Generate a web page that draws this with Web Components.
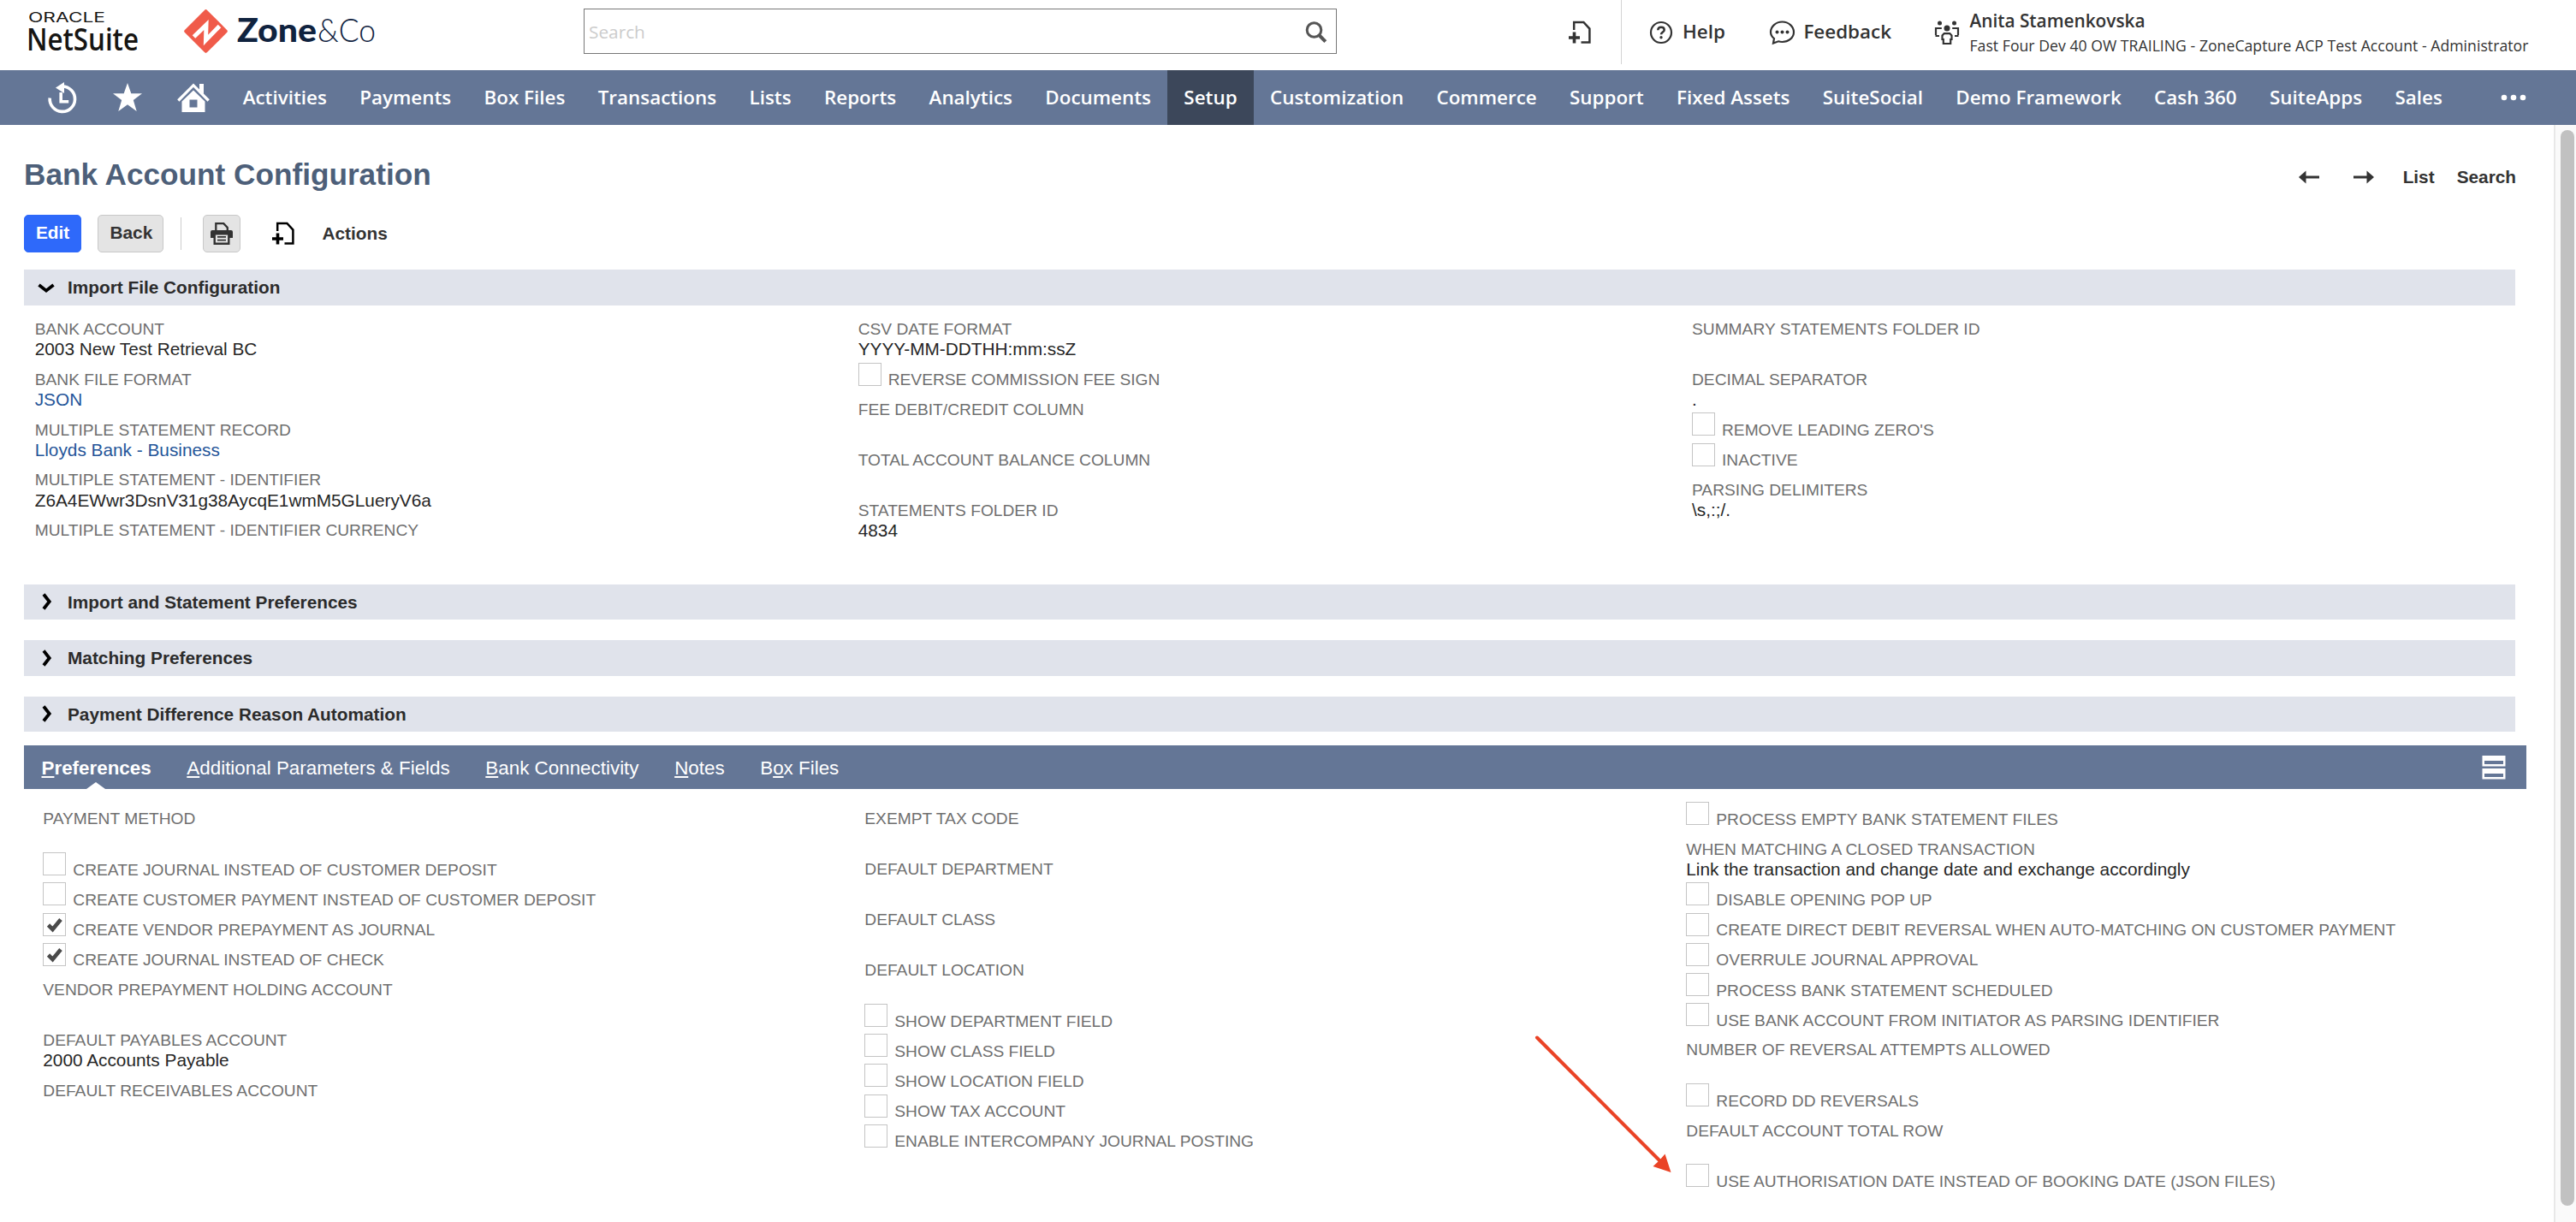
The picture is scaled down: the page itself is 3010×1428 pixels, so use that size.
<!DOCTYPE html>
<html lang="en">
<head>
<meta charset="utf-8">
<title>Bank Account Configuration</title>
<style>
  body {
    margin: 0;
    width: 3010px;
    height: 1428px;
    overflow: hidden;
    background: #fff;
    color: #262626;
    font: 20.8px "Liberation Sans", Arial, sans-serif;
  }
</style>
</head>
<body>
<ns-app>
  <ns-header slot="header" user="Anita Stamenkovska" role-name="Fast Four Dev 40 OW TRAILING - ZoneCapture ACP Test Account - Administrator"></ns-header>
  <ns-nav slot="nav">
    <ns-nav-item>Activities</ns-nav-item>
    <ns-nav-item>Payments</ns-nav-item>
    <ns-nav-item>Box Files</ns-nav-item>
    <ns-nav-item>Transactions</ns-nav-item>
    <ns-nav-item>Lists</ns-nav-item>
    <ns-nav-item>Reports</ns-nav-item>
    <ns-nav-item>Analytics</ns-nav-item>
    <ns-nav-item>Documents</ns-nav-item>
    <ns-nav-item active>Setup</ns-nav-item>
    <ns-nav-item>Customization</ns-nav-item>
    <ns-nav-item>Commerce</ns-nav-item>
    <ns-nav-item>Support</ns-nav-item>
    <ns-nav-item>Fixed Assets</ns-nav-item>
    <ns-nav-item>SuiteSocial</ns-nav-item>
    <ns-nav-item>Demo Framework</ns-nav-item>
    <ns-nav-item>Cash 360</ns-nav-item>
    <ns-nav-item>SuiteApps</ns-nav-item>
    <ns-nav-item>Sales</ns-nav-item>
  </ns-nav>

  <ns-page-head>Bank Account Configuration</ns-page-head>
  <ns-toolbar></ns-toolbar>

  <ns-section heading="Import File Configuration" open>
    <ns-columns style="--columns: 962px 974.3px 1fr; --inset: 12.7px; height: 326px; padding-top: 5.4px">
      <ns-column>
        <ns-field label="BANK ACCOUNT">2003 New Test Retrieval BC</ns-field>
        <ns-field label="BANK FILE FORMAT" link>JSON</ns-field>
        <ns-field label="MULTIPLE STATEMENT RECORD" link>Lloyds Bank - Business</ns-field>
        <ns-field label="MULTIPLE STATEMENT - IDENTIFIER">Z6A4EWwr3DsnV31g38AycqE1wmM5GLueryV6a</ns-field>
        <ns-field label="MULTIPLE STATEMENT - IDENTIFIER CURRENCY"></ns-field>
      </ns-column>
      <ns-column>
        <ns-field label="CSV DATE FORMAT">YYYY-MM-DDTHH:mm:ssZ</ns-field>
        <ns-check>REVERSE COMMISSION FEE SIGN</ns-check>
        <ns-field label="FEE DEBIT/CREDIT COLUMN"></ns-field>
        <ns-field label="TOTAL ACCOUNT BALANCE COLUMN"></ns-field>
        <ns-field label="STATEMENTS FOLDER ID">4834</ns-field>
      </ns-column>
      <ns-column>
        <ns-field label="SUMMARY STATEMENTS FOLDER ID"></ns-field>
        <ns-field label="DECIMAL SEPARATOR">.</ns-field>
        <ns-check>REMOVE LEADING ZERO'S</ns-check>
        <ns-check>INACTIVE</ns-check>
        <ns-field label="PARSING DELIMITERS">\s,:;/.</ns-field>
      </ns-column>
    </ns-columns>
  </ns-section>
  <ns-section heading="Import and Statement Preferences"></ns-section>
  <ns-section heading="Matching Preferences"></ns-section>
  <ns-section heading="Payment Difference Reason Automation"></ns-section>

  <ns-tabs>
    <ns-tab active><u>P</u>references</ns-tab>
    <ns-tab><u>A</u>dditional Parameters &amp; Fields</ns-tab>
    <ns-tab><u>B</u>ank Connectivity</ns-tab>
    <ns-tab><u>N</u>otes</ns-tab>
    <ns-tab>B<u>o</u>x Files</ns-tab>
    <ns-columns slot="panel" style="--columns: 960px 960px 1fr; --inset: 22.3px; padding-top: 12.6px">
      <ns-column>
        <ns-field label="PAYMENT METHOD"></ns-field>
        <ns-check>CREATE JOURNAL INSTEAD OF CUSTOMER DEPOSIT</ns-check>
        <ns-check>CREATE CUSTOMER PAYMENT INSTEAD OF CUSTOMER DEPOSIT</ns-check>
        <ns-check checked>CREATE VENDOR PREPAYMENT AS JOURNAL</ns-check>
        <ns-check checked>CREATE JOURNAL INSTEAD OF CHECK</ns-check>
        <ns-field label="VENDOR PREPAYMENT HOLDING ACCOUNT"></ns-field>
        <ns-field label="DEFAULT PAYABLES ACCOUNT">2000 Accounts Payable</ns-field>
        <ns-field label="DEFAULT RECEIVABLES ACCOUNT"></ns-field>
      </ns-column>
      <ns-column>
        <ns-field label="EXEMPT TAX CODE"></ns-field>
        <ns-field label="DEFAULT DEPARTMENT"></ns-field>
        <ns-field label="DEFAULT CLASS"></ns-field>
        <ns-field label="DEFAULT LOCATION"></ns-field>
        <ns-check>SHOW DEPARTMENT FIELD</ns-check>
        <ns-check>SHOW CLASS FIELD</ns-check>
        <ns-check>SHOW LOCATION FIELD</ns-check>
        <ns-check>SHOW TAX ACCOUNT</ns-check>
        <ns-check>ENABLE INTERCOMPANY JOURNAL POSTING</ns-check>
      </ns-column>
      <ns-column>
        <ns-check>PROCESS EMPTY BANK STATEMENT FILES</ns-check>
        <ns-field label="WHEN MATCHING A CLOSED TRANSACTION">Link the transaction and change date and exchange accordingly</ns-field>
        <ns-check>DISABLE OPENING POP UP</ns-check>
        <ns-check>CREATE DIRECT DEBIT REVERSAL WHEN AUTO-MATCHING ON CUSTOMER PAYMENT</ns-check>
        <ns-check>OVERRULE JOURNAL APPROVAL</ns-check>
        <ns-check>PROCESS BANK STATEMENT SCHEDULED</ns-check>
        <ns-check>USE BANK ACCOUNT FROM INITIATOR AS PARSING IDENTIFIER</ns-check>
        <ns-field label="NUMBER OF REVERSAL ATTEMPTS ALLOWED"></ns-field>
        <ns-check>RECORD DD REVERSALS</ns-check>
        <ns-field label="DEFAULT ACCOUNT TOTAL ROW"></ns-field>
        <ns-check>USE AUTHORISATION DATE INSTEAD OF BOOKING DATE (JSON FILES)</ns-check>
      </ns-column>
    </ns-columns>
  </ns-tabs>
  <ns-scrollbar slot="scrollbar"></ns-scrollbar>
  <ns-pointer slot="overlay"></ns-pointer>
</ns-app>

<script>
// name: [width, height, markup]
const icons = {
  search: [26, 26, `<circle cx="10.5" cy="10" r="8.3" fill="none" stroke="#555" stroke-width="3"/><path d="M16.3 16l7.5 7.7" stroke="#555" stroke-width="4"/>`],
  newdoc: [26, 28, `<path d="M6.2 11V2h11.2L24.4 9.6V25.6H14.5" fill="none" stroke="currentColor" stroke-width="2.5"/><path d="M0 20h13M6.5 13.6v13" stroke="currentColor" stroke-width="3.6"/>`],
  help: [28, 28, `<circle cx="14" cy="14" r="12" fill="none" stroke="#333" stroke-width="2.2"/><path d="M10.3 11.2c0-2.200 1.600-3.500 3.700-3.500s3.700 1.200 3.700 3.200c0 2.500-3.700 2.600-3.700 5.300" fill="none" stroke="#333" stroke-width="2.500"/><circle cx="14" cy="19.800" r="1.700" fill="#333"/>`],
  feedback: [31, 28, `<path d="M5 26.500l1-5.500C3.500 19 2 16.500 2 13.500 2 7 8 1.500 15.500 1.500S29 7 29 13.500 23 25 15.500 25c-1.700 0-3-.2-4.500-.7z" fill="none" stroke="#333" stroke-width="2.200"/><g fill="#333"><circle cx="9.500" cy="13.500" r="2"/><circle cx="15.500" cy="13.500" r="2"/><circle cx="21.500" cy="13.500" r="2"/></g>`],
  role: [30, 30, `<g fill="#333"><circle cx="6.500" cy="3" r="2.500"/><circle cx="23.500" cy="3" r="2.500"/><circle cx="15" cy="9" r="3.500"/></g><path d="M8.800 9H2v8M21.200 9H28v8M1.500 18h4.500M28.500 18h-4.500M10.800 27v-5H9.500v-4.500l2.200-2.400h6.600l2.200 2.400V22h-1.300v5z" fill="none" stroke="#333" stroke-width="2.200"/>`],
  history: [34, 36, `<path d="M2.200 18.500A14.700 14.700 0 1 0 17 5" fill="none" stroke="#fff" stroke-width="3.600"/><path d="M9 6.500L19 0v13z" fill="#fff"/><path d="M15.200 12v10.800h9" fill="none" stroke="#fff" stroke-width="3.600"/>`],
  star: [34, 34, `<path d="M17 0l4.300 12.300H34L23.800 20 27.700 33 17 25.300 6.300 33l3.900-13L0 12.300h12.700z" fill="#fff"/>`],
  home: [38, 34, `<path d="M19 8.500l13.500 13V34h-27V21.500zM14.500 19.500v9h9v-9z" fill="#fff" fill-rule="evenodd"/><path d="M1.300 20.500L19 2.700l17.700 17.800" fill="none" stroke="#fff" stroke-width="3.200"/><path d="M26 1h5v12l-5-5z" fill="#fff"/>`],
  dots: [30, 8, `<g fill="#fff"><circle cx="4" cy="4" r="3.300"/><circle cx="15" cy="4" r="3.300"/><circle cx="26" cy="4" r="3.300"/></g>`],
  left: [24, 16, `<path d="M24 8H5" stroke="#333" stroke-width="3"/><path d="M0 8l8.500-7.500v15z" fill="#333"/>`],
  right: [24, 16, `<path d="M0 8h19" stroke="#333" stroke-width="3"/><path d="M24 8L15.500.5v15z" fill="#333"/>`],
  printer: [26, 26, `<path d="M6.300 10V1.200h9l4.500 4.700V10" fill="none" stroke="#333" stroke-width="2.300"/><path d="M2 9h22a2 2 0 0 1 2 2v7h-4v-4H4v4H0v-7a2 2 0 0 1 2-2z" fill="#333"/><path d="M4.700 13.200h16.600v11.500H4.700z" fill="#e4e4e4" stroke="#333" stroke-width="2.400"/><path d="M8 16.800h10M8 20.600h10" stroke="#333" stroke-width="1.800"/>`],
  down: [20, 12, `<path d="M1.500 2L10 8.700 18.500 2" fill="none" stroke="#000" stroke-width="3.800"/>`],
  next: [12, 20, `<path d="M2 1.500L8.700 10 2 18.500" fill="none" stroke="#000" stroke-width="3.800"/>`],
  check: [20, 17, `<path d="M2.500 9l5 5L17 2.500" fill="none" stroke="#4a4a4a" stroke-width="4.600"/>`],
  rows: [28, 28, `<path d="M.5 0h27v12.500H.5zM3 6v4h22V6zM.5 15h27v12.500H.5zM3 21v4h22v-4z" fill="#fff" fill-rule="evenodd"/>`],
};

function define(name, html, setup) {
  const template = document.createElement("template");
  template.innerHTML = html;
  customElements.define(name, class extends HTMLElement {
    constructor() {
      super();
      this.attachShadow({ mode: "open" }).appendChild(template.content.cloneNode(true));
    }
    connectedCallback() {
      if (setup) setup(this, this.shadowRoot);
    }
  });
}

define("ns-icon", `<style>:host { display: block; flex: none; } svg { display: block; overflow: visible; }</style><span></span>`, (host, root) => {
  const [w, h, markup] = icons[host.getAttribute("name")];
  root.querySelector("span").innerHTML = `<svg width="${w}" height="${h}" viewBox="0 0 ${w} ${h}">${markup}</svg>`;
});

define("ns-app", `
  <style>
    :host { display: grid; grid-template: 82px 64px 1fr / 1fr 26px; height: 1428px; position: relative; }
    .header, .nav { grid-column: 1 / -1; }
    main { padding: 0 32px 0 28px; min-width: 0; overflow: hidden; }
  </style>
  <div class="header"><slot name="header"></slot></div>
  <div class="nav"><slot name="nav"></slot></div>
  <main><slot></slot></main>
  <slot name="scrollbar"></slot>
  <slot name="overlay"></slot>
`);

define("ns-logo", `
  <style>:host { display: block; flex: none; } svg { display: block; }</style>
  <svg width="460" height="82" viewBox="0 0 460 82">
    <g fill="#161513">
      <text x="33" y="25.5" font-family="Inter, sans-serif" font-weight="400" font-size="15.5" textLength="90" lengthAdjust="spacingAndGlyphs">ORACLE</text>
      <text x="31" y="59" font-family="Open Sans, sans-serif" font-size="36.500" textLength="131" lengthAdjust="spacingAndGlyphs">NetSuite</text>
    </g>
    <path d="M240.500 13.500L263.500 36.500 240.500 59.500 217.500 36.500z" fill="#f05b4a" stroke="#f05b4a" stroke-width="4.500" stroke-linejoin="round"/>
    <path d="M226.500 43L241 29l-.5 18L256.500 30.500" fill="none" stroke="#fff" stroke-width="5"/>
    <g fill="#10233f" font-family="Lato, sans-serif" font-size="38">
      <text x="277" y="49" font-weight="900" textLength="93" lengthAdjust="spacingAndGlyphs">Zone</text>
      <text x="371" y="49" font-weight="300" textLength="68" lengthAdjust="spacingAndGlyphs">&amp;Co</text>
    </g>
  </svg>
`);

define("ns-header", `
  <style>
    :host { display: flex; height: 82px; color: #333; font: 600 22.4px "Open Sans", sans-serif; }
    .search { box-sizing: border-box; width: 880px; height: 53px; margin: 10px 271px 0 222px; padding: 0 10.5px 0 5px; border: 1px solid #777; display: flex; align-items: center; justify-content: space-between; color: #ccc; font-weight: 400; font-size: 20.8px; }
    .search ns-icon { margin-top: 2px; }
    .new { margin-top: 24px; width: 61px; }
    .rule { width: 1px; height: 75px; background: #d4d4d4; margin-right: 32px; }
    .link { display: flex; gap: 11px; height: 26px; margin-top: 24px; line-height: 26px; }
    .feedback { margin-left: 51px; gap: 9.5px; }
    .user { display: flex; gap: 11px; margin-left: 50.5px; }
    .user ns-icon { margin-top: 24px; }
    .name { margin-top: 8px; line-height: 33px; font-size: 20.8px; }
    .role { line-height: 24px; font-size: 17.6px; letter-spacing: .045px; font-weight: 400; white-space: nowrap; }
  </style>
  <ns-logo></ns-logo>
  <div class="search"><span>Search</span><ns-icon name="search"></ns-icon></div>
  <ns-icon class="new" name="newdoc"></ns-icon>
  <div class="rule"></div>
  <div class="link"><ns-icon name="help"></ns-icon><span>Help</span></div>
  <div class="link feedback"><ns-icon name="feedback"></ns-icon><span>Feedback</span></div>
  <div class="user">
    <ns-icon name="role"></ns-icon>
    <div><div class="name"></div><div class="role"></div></div>
  </div>
`, (host, root) => {
  root.querySelector(".name").textContent = host.getAttribute("user");
  root.querySelector(".role").textContent = host.getAttribute("role-name");
});

define("ns-nav", `
  <style>
    :host { display: flex; height: 64px; background: #647696; color: #fff; box-sizing: border-box; padding: 0 58px 0 56px; }
    .icons { display: flex; align-items: center; gap: 41.5px; width: 208.5px; }
    .items { display: flex; flex: 1; }
    .more { align-self: center; }
  </style>
  <div class="icons"><ns-icon name="history"></ns-icon><ns-icon name="star"></ns-icon><ns-icon name="home"></ns-icon></div>
  <div class="items"><slot></slot></div>
  <ns-icon class="more" name="dots"></ns-icon>
`);

define("ns-nav-item", `
  <style>
    :host { display: block; padding: 0 19.2px; font: 600 22.4px/63px "Open Sans", sans-serif; white-space: nowrap; }
    :host([active]) { background: #3c475a; }
  </style>
  <slot></slot>
`);

define("ns-page-head", `
  <style>
    :host { display: flex; justify-content: space-between; height: 105px; padding-right: 12px; }
    h1 { margin: 38px 0 0; font-size: 35.2px; line-height: 40px; color: #4d5f79; }
    nav { display: flex; align-items: center; height: 24px; margin-top: 49px; font-weight: bold; color: #333; }
    .left { margin-right: 40px; }
    .right { margin-right: 33.5px; }
    .list { margin-right: 26px; }
  </style>
  <h1><slot></slot></h1>
  <nav>
    <ns-icon class="left" name="left"></ns-icon>
    <ns-icon class="right" name="right"></ns-icon>
    <span class="list">List</span><span>Search</span>
  </nav>
`);

define("ns-toolbar", `
  <style>
    :host { display: flex; align-items: center; height: 44px; margin-bottom: 20px; font-weight: bold; color: #333; }
    .button { box-sizing: border-box; height: 44px; padding: 0 13.5px; border: 1px solid #c8c8c8; border-radius: 5px; background: #e4e4e4; line-height: 39px; }
    .edit { width: 67px; padding: 0 13px; background: #2e69fa; border-color: #2e69fa; color: #fff; margin-right: 19px; }
    .back { width: 77px; margin-right: 20px; }
    .rule { width: 1px; height: 38px; background: #ccc; margin-right: 25px; }
    .print { width: 44px; padding: 8px 8px; margin-right: 37px; }
    .new { color: #000; margin-right: 32.5px; }
  </style>
  <div class="button edit">Edit</div>
  <div class="button back">Back</div>
  <div class="rule"></div>
  <div class="button print"><ns-icon name="printer"></ns-icon></div>
  <ns-icon class="new" name="newdoc"></ns-icon>
  <span>Actions</span>
`);

define("ns-section", `
  <style>
    :host { display: block; margin-right: 13px; margin-bottom: 24.1px; }
    :host([open]) { margin-bottom: 0; }
    header { display: flex; align-items: center; height: 41.5px; background: #e0e3eb; font-weight: bold; color: #2b2b2b; line-height: 41.5px; }
    .icon { width: 30.5px; padding-left: 20.5px; }
    :host([open]) .icon { width: 35.5px; padding: 2px 0 0 15.5px; }
  </style>
  <header><div class="icon"></div><span></span></header>
  <slot></slot>
`, (host, root) => {
  const icon = document.createElement("ns-icon");
  icon.setAttribute("name", host.hasAttribute("open") ? "down" : "next");
  root.querySelector(".icon").replaceChildren(icon);
  root.querySelector("span").textContent = host.getAttribute("heading");
});

define("ns-columns", `
  <style>:host { display: grid; box-sizing: border-box; grid-template-columns: var(--columns); padding-left: var(--inset); align-items: start; }</style>
  <slot></slot>
`);

define("ns-column", `
  <style>:host { display: flex; flex-direction: column; }</style>
  <slot></slot>
`);

define("ns-field", `
  <style>
    :host { display: block; box-sizing: border-box; height: 58.9px; padding-top: 10.9px; white-space: nowrap; }
    .label { font-size: 19.2px; line-height: 23.7px; height: 23.1px; color: #6f6f6f; }
    .value { line-height: 24px; }
    :host([link]) .value { color: #255599; }
  </style>
  <div class="label"></div>
  <div class="value"><slot></slot></div>
`, (host, root) => {
  root.querySelector(".label").textContent = host.getAttribute("label");
});

define("ns-check", `
  <style>
    :host { display: flex; box-sizing: border-box; height: 35.2px; padding-top: 2.8px; gap: 8px; white-space: nowrap; font-size: 19.2px; line-height: 24px; color: #6f6f6f; }
    .box { box-sizing: border-box; width: 27px; height: 27px; border: 1px solid #c4c4c4; padding: 4px 0 0 3px; }
    .box ns-icon { display: none; }
    :host([checked]) .box ns-icon { display: block; }
    span { padding-top: 8.6px; }
  </style>
  <div class="box"><ns-icon name="check"></ns-icon></div>
  <span><slot></slot></span>
`);

define("ns-tabs", `
  <style>
    :host { display: block; margin-top: -8.3px; }
    .bar { display: flex; justify-content: space-between; height: 51px; background: #647696; color: #fff; padding: 0 24px 0 20.5px; }
    .tabs { display: flex; gap: 41.6px; }
    ns-icon { margin-top: 12px; }
  </style>
  <div class="bar">
    <div class="tabs"><slot></slot></div>
    <ns-icon name="rows"></ns-icon>
  </div>
  <slot name="panel"></slot>
`);

define("ns-tab", `
  <style>
    :host { display: block; position: relative; font-size: 22.4px; line-height: 53px; height: 51px; white-space: nowrap; }
    :host([active]) { font-weight: bold; }
    :host([active])::after { content: ""; position: absolute; left: 50%; bottom: 0; margin-left: -12px; border: 11px solid transparent; border-top: 0; border-bottom: 8px solid #fff; }
  </style>
  <slot></slot>
`);

define("ns-scrollbar", `
  <style>
    :host { display: block; box-sizing: border-box; border-left: 2px solid #e8e8e8; background: #fafafa; padding: 6px 2px 19px 6px; }
    div { height: 100%; border-radius: 8px; background: #c1c1c1; }
  </style>
  <div></div>
`);

// red callout arrow laid over the form
define("ns-pointer", `
  <style>:host { display: block; position: absolute; left: 1790px; top: 1206px; } svg { display: block; }</style>
  <svg width="170" height="170" viewBox="0 0 170 170">
    <path d="M6 6.500L150 151" stroke="#ea4326" stroke-width="4" stroke-linecap="round"/>
    <path d="M162.500 164L141.500 157 149 150 155.500 142.500z" fill="#ea4326"/>
  </svg>
`);
</script>
</body>
</html>
